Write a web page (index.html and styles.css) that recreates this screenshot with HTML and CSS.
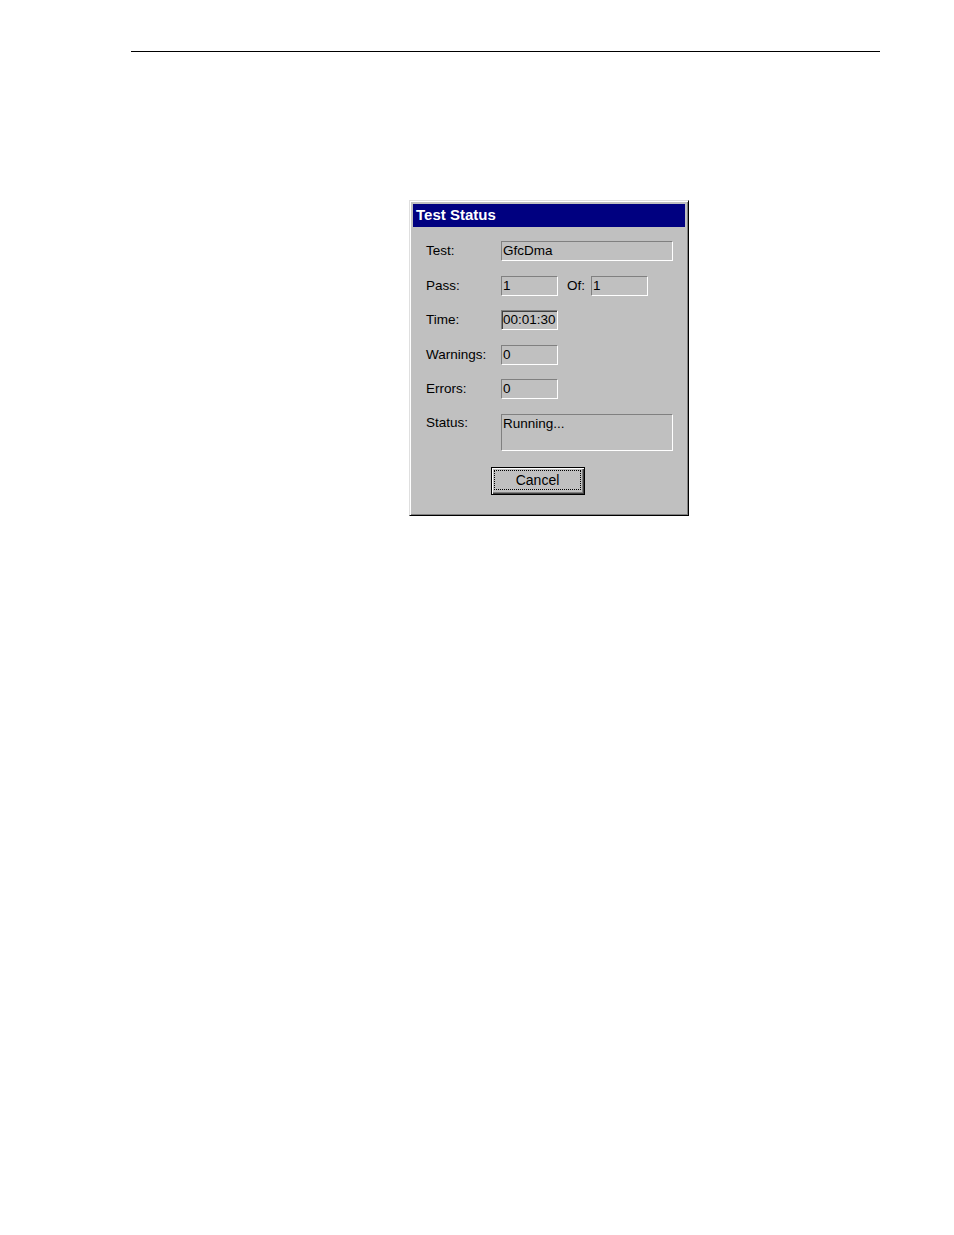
FILE: index.html
```html
<!DOCTYPE html>
<html>
<head>
<meta charset="utf-8">
<link rel="stylesheet" href="styles.css">
</head>
<body>
<div class="rule"></div>
<div class="dialog">
  <div class="titlebar">Test Status</div>
  <div class="content">
    <div class="grid">
      <div class="label">Test:</div>
      <div class="field wide">GfcDma</div>
      <div class="label">Pass:</div>
      <div class="pair">
        <div class="field short">1</div>
        <div class="of">Of:</div>
        <div class="field short">1</div>
      </div>
      <div class="label">Time:</div>
      <div class="field short focus">00:01:30</div>
      <div class="label">Warnings:</div>
      <div class="field short">0</div>
      <div class="label">Errors:</div>
      <div class="field short">0</div>
      <div class="label top">Status:</div>
      <div class="field wide tall">Running...</div>
    </div>
    <div class="actions">
      <div class="button"><span class="focusrect">Cancel</span></div>
    </div>
  </div>
</div>
</body>
</html>
```
FILE: styles.css
```css
html, body {
  margin: 0;
  padding: 0;
  background: #ffffff;
}
body {
  font-family: "Liberation Sans", Arial, sans-serif;
  width: 954px;
  height: 1235px;
}
.rule {
  margin-left: 131px;
  padding-top: 51px;
  width: 749px;
  border-bottom: 1px solid #000;
}
.dialog {
  margin-left: 409px;
  margin-top: 148px;
  width: 280px;
  height: 316px;
  box-sizing: border-box;
  background: #c0c0c0;
  border-top: 1px solid #dfdfdf;
  border-left: 1px solid #dfdfdf;
  border-right: 1px solid #000;
  border-bottom: 1px solid #000;
  box-shadow: inset 1px 1px 0 #fff, inset -1px -1px 0 #808080;
  padding: 3px 3px 3px 3px;
  display: flex;
  flex-direction: column;
}
.titlebar {
  height: 23px;
  box-sizing: border-box;
  background: #000080;
  color: #fff;
  font-weight: bold;
  font-size: 15px;
  line-height: 21px;
  padding-left: 3px;
}
.content {
  padding: 14px 0 0 13px;
}
.grid {
  display: grid;
  grid-template-columns: 75px auto;
  row-gap: 14.6px;
  align-items: center;
  color: #000;
  font-size: 13.5px;
}
.label {
  line-height: 20px;
  color: #000;
}
.label.top {
  align-self: start;
  line-height: 18px;
}
.field {
  box-sizing: border-box;
  height: 20px;
  border-top: 1px solid #808080;
  border-left: 1px solid #808080;
  border-right: 1px solid #fff;
  border-bottom: 1px solid #fff;
  padding: 0 0 0 1px;
  line-height: 18px;
  font-size: 13.5px;
  color: #000;
  white-space: nowrap;
}
.field.wide { width: 172px; }
.field.short { width: 57px; }
.field.tall {
  height: 37px;
  line-height: 18px;
}
.field.focus {
  box-shadow: inset 1px 1px 0 #404040;
}
.pair {
  display: flex;
  align-items: center;
}
.of {
  margin-left: 9px;
  width: 24px;
}
.actions {
  padding-top: 16px;
  padding-left: 65px;
}
.button {
  box-sizing: border-box;
  width: 94px;
  height: 28px;
  border: 1px solid #000;
  background: #c0c0c0;
  box-shadow: inset 1px 1px 0 #fff, inset -1px -1px 0 #404040, inset -2px -2px 0 #808080;
  display: flex;
  align-items: center;
  justify-content: center;
  padding: 0 3px 1px 2px;
}
.focusrect {
  flex: 1;
  box-sizing: border-box;
  height: 20px;
  border: 1px dotted #000;
  text-align: center;
  font-size: 14px;
  line-height: 18px;
  color: #000;
}
```
